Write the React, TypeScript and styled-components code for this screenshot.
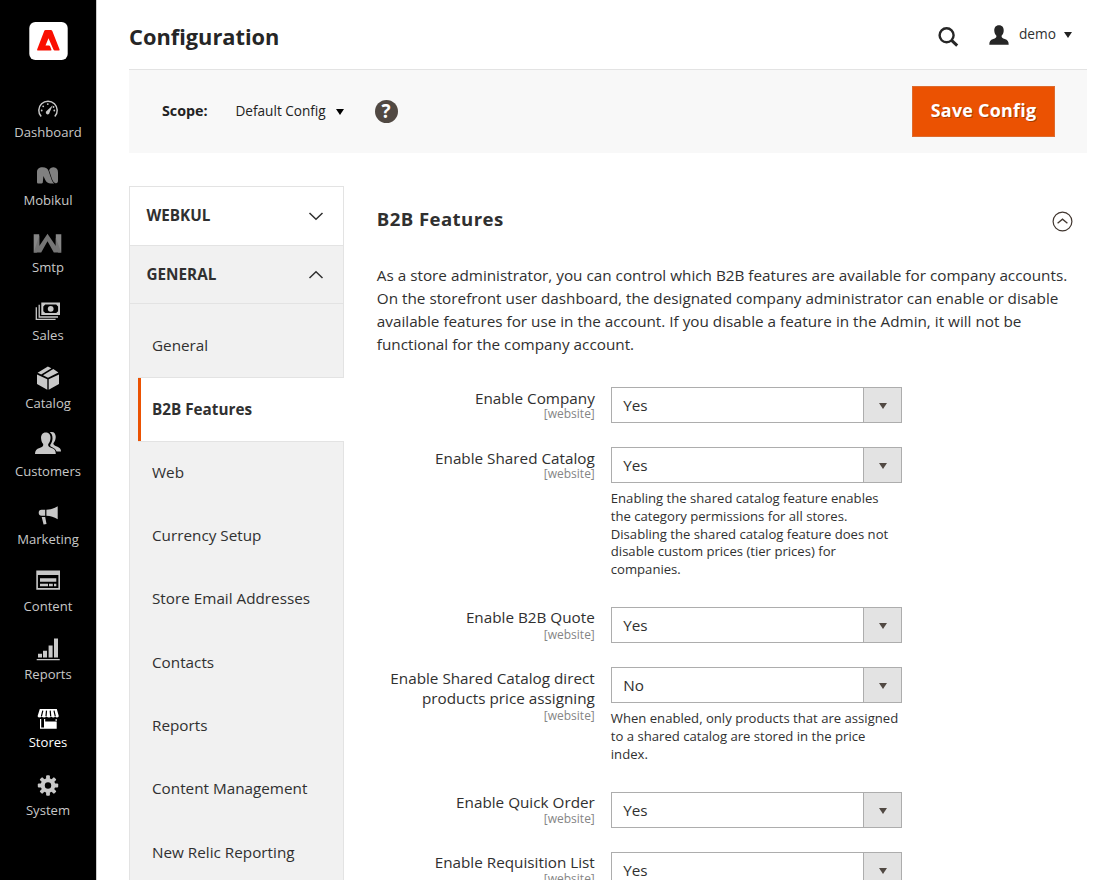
import React from 'react';
import styled, { createGlobalStyle, css } from 'styled-components';

const GlobalStyle = createGlobalStyle`
  *, *::before, *::after { box-sizing: border-box; }
  html, body { margin: 0; padding: 0; height: 880px; overflow: hidden; background: #fff; }
  body { font-family: "Open Sans", "Noto Sans", sans-serif; font-size: 15.28px; color: #303030; }
  button { font-family: inherit; border: 0; padding: 0; background: none; color: inherit; }
`;

/* ---------- page frame ---------- */

const Page = styled.div`
  display: flex;
  width: 1120px;
  height: 880px;
  overflow: hidden;
`;

const Sidebar = styled.nav`
  flex: none;
  display: flex;
  flex-direction: column;
  align-items: center;
  width: 97px;
  background: #000;
  border-right: 1px solid #ccc;
`;

const Logo = styled.svg`
  display: block;
  width: 40px;
  height: 40px;
  margin: 21px 0 31px;
`;

const NavList = styled.ul`
  list-style: none;
  margin: 0;
  padding: 0;
  width: 96px;
`;

const NavItem = styled.li<{ $active?: boolean }>`
  display: flex;
  flex-direction: column;
  align-items: center;
  height: 67.8px;
  color: ${(p) => (p.$active ? '#fff' : '#c8c8c8')};
`;

const NavIcon = styled.svg`
  display: block;
  flex: none;
  width: 40px;
  height: 34px;
`;

const NavLabel = styled.span`
  margin-top: -1.15px;
  font-size: 13.09px;
  line-height: 14px;
  white-space: nowrap;
`;

const Main = styled.main`
  flex: none;
  width: 958px;
  margin-left: 32px;
`;

/* ---------- header ---------- */

const Header = styled.header`
  display: flex;
  align-items: center;
  justify-content: space-between;
  height: 70px;
  border-bottom: 1px solid #e3e3e3;
`;

const PageTitle = styled.h1`
  margin: 0;
  padding-top: 5px;
  font-size: 21.8px;
  line-height: 30px;
  font-weight: 700;
  color: #262626;
`;

const HeaderTools = styled.div`
  display: flex;
  align-items: center;
  height: 69px;
  padding-right: 15px;
`;

const SearchIcon = styled.svg`
  width: 22px;
  height: 22px;
  margin: 4px 29.5px 0 0;
`;

const UserIcon = styled.svg`
  width: 20px;
  height: 20px;
  margin-right: 10.5px;
`;

const UserName = styled.span`
  width: 38px;
  margin-right: 7px;
  padding-bottom: 2px;
  font-size: 13.7px;
  line-height: 20px;
`;

const Caret = styled.i<{ $color?: string; $top?: number }>`
  display: block;
  width: 0;
  height: 0;
  margin-top: ${(p) => p.$top ?? 0}px;
  border: solid transparent;
  border-width: 6px 4.5px 0;
  border-top-color: ${(p) => p.$color ?? '#222'};
`;

/* ---------- toolbar ---------- */

const Toolbar = styled.section`
  display: flex;
  align-items: center;
  height: 83px;
  padding: 0 32px 0 33px;
  background: #f8f8f8;
`;

const ScopeLabel = styled.span`
  width: 73.5px;
  padding-bottom: 2px;
  font-size: 14.3px;
  font-weight: 700;
  color: #222;
`;

const ScopeValue = styled.span`
  width: 100px;
  padding-bottom: 2px;
  font-size: 13.6px;
  color: #222;
`;

const Help = styled.span`
  display: flex;
  align-items: center;
  justify-content: center;
  width: 23px;
  height: 23px;
  margin: 0 0 1px 31px;
  border-radius: 50%;
  background: #514943;
  color: #fff;
  font-size: 19px;
  line-height: 23px;
  font-weight: 700;
`;

const SaveButton = styled.button`
  width: 143px;
  height: 51px;
  margin-left: auto;
  padding-bottom: 3px;
  background: #eb5202;
  border: 1px solid #dd6b2e;
  color: #fff;
  font-size: 17.9px;
  font-weight: 700;
  letter-spacing: 0.25px;
  text-shadow: 1px 1px 0 rgba(0, 0, 0, 0.3);
`;

/* ---------- config area ---------- */

const Columns = styled.div`
  display: flex;
  align-items: flex-start;
  margin-top: 33px;
`;

const Tabs = styled.aside`
  flex: none;
  width: 215px;
  height: 720px;
  border: 1px solid #e3e3e3;
  background: #f1f1f1;
`;

const TabHeader = styled.div<{ $open?: boolean }>`
  display: flex;
  align-items: center;
  justify-content: space-between;
  height: ${(p) => (p.$open ? 58 : 59)}px;
  padding: 0 19px 2px 16.5px;
  border-bottom: 1px solid #e3e3e3;
  background: ${(p) => (p.$open ? '#f1f1f1' : '#fff')};
  font-weight: 700;
`;

const Chevron = styled.svg`
  width: 16px;
  height: 16px;
  margin-top: 1px;
  fill: none;
  stroke: #303030;
  stroke-width: 1.5;
`;

const TabList = styled.ul`
  list-style: none;
  margin: 0;
  padding: 10px 0 0;
`;

const TabItem = styled.li<{ $active?: boolean }>`
  display: flex;
  align-items: center;
  height: 63.3px;
  padding: 0 0 1px 22px;
  ${(p) =>
    p.$active &&
    css`
      height: 64.6px;
      margin: 0 -1px -1.2px 8px;
      padding: 0 0 1px 14px;
      background: #fff;
      border: solid #e3e3e3;
      border-width: 1px 0;
      box-shadow: inset 3px 0 0 #eb5202;
      font-weight: 700;
    `}
`;

const Content = styled.section`
  width: 700px;
  margin-left: 32.8px;
`;

const SectionHead = styled.div`
  display: flex;
  align-items: center;
  justify-content: space-between;
  height: 70px;
  padding-right: 4px;
`;

const SectionTitle = styled.h2`
  margin: 0;
  padding-bottom: 5px;
  font-size: 18.6px;
  line-height: 26px;
  font-weight: 700;
  letter-spacing: 0.42px;
`;

const CollapseIcon = styled.svg`
  width: 21px;
  height: 21px;
  fill: none;
  stroke: #41362f;
`;

const Description = styled.p`
  margin: 8px 0 31px;
  font-size: 15.29px;
  line-height: 23px;
  color: #303030;
  white-space: nowrap;
`;

const Row = styled.div<{ $height: number }>`
  display: flex;
  height: ${(p) => p.$height}px;
`;

const LabelBox = styled.div<{ $top: number; $gap: number }>`
  display: flex;
  flex-direction: column;
  width: 218px;
  padding-top: ${(p) => p.$top}px;
  text-align: right;
  line-height: 20px;

  & > :last-child {
    margin-top: ${(p) => p.$gap}px;
  }
`;

const ScopeHint = styled.span`
  font-size: 12px;
  line-height: 14px;
  color: #858585;
`;

const Control = styled.div`
  width: 291.5px;
  margin-left: 16px;
`;

const Select = styled.div`
  display: flex;
  height: 36px;
  border: 1px solid #adadad;
`;

const SelectValue = styled.span`
  flex: 1;
  padding-left: 11.4px;
  line-height: 35px;
`;

const SelectArrow = styled.span`
  display: flex;
  align-items: center;
  justify-content: center;
  width: 38px;
  background: #e3e3e3;
  border-left: 1px solid #adadad;
`;

const Note = styled.p`
  margin: 6.95px 0 0;
  font-size: 13.12px;
  line-height: 17.8px;
  white-space: nowrap;
`;

/* ---------- data ---------- */

const navItems: { label: string; active?: boolean; icon: React.ReactNode }[] = [
  {
    label: 'Dashboard',
    icon: (
      <g>
        <path d="M13.2 24.6A9.2 9.2 0 1 1 26.8 24.6" fill="none" stroke="currentColor" strokeWidth="1.5" />
        <path d="M24.7 13.2L21.6 20.6A1.9 1.9 0 1 1 18.9 18.8Z" fill="currentColor" />
        {[[13.7, 18.5], [15.2, 14.3], [19.8, 12.1], [26.3, 18.5], [25.5, 15]].map(([x, y]) => (
          <circle key={x} cx={x} cy={y} r="0.9" fill="currentColor" />
        ))}
      </g>
    ),
  },
  {
    label: 'Mobikul',
    icon: (
      <g fill="#808080">
        <path d="M9 12.2C9 9.2 11 7.3 14.6 7.3C18 7.3 19.6 8.4 20.6 11L23.2 18.4C23.9 20.6 24.6 22 26.3 23.4H23C20 23.4 18.3 22.3 17.3 20L15.4 16L14.8 22.4C14.6 23.2 13.8 23.4 13 23.4H10.6C9.5 23.4 9 22.9 9 21.9Z" />
        <path d="M21.1 10.2C22.1 8.2 23.3 7.3 25.6 7.3C28.4 7.3 30 9.4 30 12.4V20.6C30 22.6 29 23.6 27.4 23.2C25.6 22.6 24.6 20.6 23.8 18.4Z" />
      </g>
    ),
  },
  {
    label: 'Smtp',
    icon: (
      <g>
        <path d="M5.7 6.2H11.2V22.4L8.6 24.4H5.7ZM33.3 6.2H27.8V22.4L30.4 24.4H33.3Z" fill="#868686" />
        <path d="M19.5 5.7L11.3 18V7.4L5.7 24.4H13.2L19.5 13.2L25.8 24.4H33.3L27.8 10V18Z" fill="#757575" />
      </g>
    ),
  },
  {
    label: 'Sales',
    icon: (
      <g>
        <path fillRule="evenodd" d="M13.3 7.6H32V20H13.3ZM17.2 9.6L15.3 11.5V16.2L17.2 18H28.2L30.1 16.2V11.5L28.2 9.6Z" fill="currentColor" />
        <circle cx="22.7" cy="13.8" r="2.9" fill="currentColor" />
        <path d="M11.2 9.8V22H30M8.3 12.2V24.4H27.6" fill="none" stroke="currentColor" strokeWidth="1.3" />
      </g>
    ),
  },
  {
    label: 'Catalog',
    icon: (
      <g fill="currentColor">
        <path d="M9 11.5L19.3 16.2V26.8L9 21.1ZM31 11.5L20.7 16.2V26.8L31 21.1Z" />
        <path d="M9.6 9.8L19.9 3.5L23.4 5.2L13.2 11.4Z" />
        <path d="M15 12.3L25.3 6.1L30.4 9.4L20 14.8Z" />
      </g>
    ),
  },
  {
    label: 'Customers',
    icon: (
      <g fill="currentColor">
        <path d="M17.8 1.5C21.2 1.5 22.9 4.1 22.5 7.6C22.3 10 21.4 11.8 20.2 13C19.9 15.4 21 16.1 23.6 17C26.5 18 27.8 19.5 27.8 23H7C7 19.5 8.6 18 11.6 17C14.3 16.1 15.5 15.4 15.2 13C14 11.8 13.3 10 13.1 7.6C12.8 4.1 14.4 1.5 17.8 1.5Z" />
        <path d="M21.7 1.3C25.4-.1 28 2.2 27.7 6.5C27.5 9 26.7 10.8 25.4 12.2C25.2 14.1 26.7 14.7 29 15.6C31.8 16.7 33 18 33 20.6H28.6C27.5 17.8 25.6 16.6 22.7 15.4C22.2 15 22.1 14.2 22.3 13.7C23.7 12 24.4 10 24.5 7.6C24.6 4.7 23.7 2.5 21.7 1.3Z" />
      </g>
    ),
  },
  {
    label: 'Marketing',
    icon: (
      <g fill="currentColor">
        <path d="M29.7 7.2V20.3C26 17.8 22.6 16.9 18.4 16.7V10.7C22.6 10.5 26 9.7 29.7 7.2Z" />
        <path d="M17.2 10.7V16.7H13.5C11.7 16.7 10.7 15.4 10.7 13.7C10.7 12 11.7 10.7 13.5 10.7Z" />
        <path d="M13.7 18H17.2L18.5 24.9L15.6 25.5Z" />
      </g>
    ),
  },
  {
    label: 'Content',
    icon: (
      <g fill="currentColor">
        <path fillRule="evenodd" d="M8.3 3.4H32V22.7H8.3ZM9.9 8.1V21.1H30.4V8.1Z" />
        <path d="M12 11.3H28.3V14.7H12ZM12 16.8H20V19.2H12ZM21 16.8H24.8V19.2H21ZM26 16.8H28.3V19.2H26Z" />
      </g>
    ),
  },
  {
    label: 'Reports',
    icon: (
      <path
        d="M8.7 25H31.7V26.3H8.7ZM10 19.8H14V23.6H10ZM15 16.8H19V23.6H15ZM20.6 11.6H24.6V23.6H20.6ZM26 4.6H30V23.6H26Z"
        fill="currentColor"
      />
    ),
  },
  {
    label: 'Stores',
    active: true,
    icon: (
      <g>
        <path d="M11.8 7.1H28.8L30.7 13.8V14.6C30 15.7 28.3 15.7 27.2 14.8C26 15.7 24.4 15.7 23.3 14.8C22 15.7 20 15.7 18.5 14.8C17 15.7 15 15.7 13.7 14.8C12.6 15.7 10.3 15.7 9.7 14.6V13.8Z" fill="currentColor" />
        <path d="M14.8 8.6L13.4 14.4M18.5 8.6L18 14.4M22.2 8.6L22.7 14.4M26 8.6L27.3 14.4" stroke="#000" strokeWidth="1.2" />
        <path fillRule="evenodd" d="M12 17H13.2V25.4H16V17H17.2V19.6H28.7V26.8H12ZM27.6 17H28.7V20H27.6Z" fill="currentColor" />
      </g>
    ),
  },
  {
    label: 'System',
    icon: (
      <g>
        <g fill="currentColor">
          {[0, 45, 90, 135].map((angle) => (
            <rect key={angle} x="18.1" y="5.3" width="3.8" height="20.4" rx="1" transform={`rotate(${angle} 20 15.5)`} />
          ))}
        </g>
        <circle cx="20" cy="15.5" r="5.3" fill="none" stroke="currentColor" strokeWidth="4" />
        <circle cx="20" cy="15.5" r="3.2" fill="#000" />
      </g>
    ),
  },
];

const tabs = [
  'General',
  'B2B Features',
  'Web',
  'Currency Setup',
  'Store Email Addresses',
  'Contacts',
  'Reports',
  'Content Management',
  'New Relic Reporting',
];

interface Field {
  label: string[];
  value: string;
  height: number;
  top: number;
  gap: number;
  note?: string[];
}

const fields: Field[] = [
  { label: ['Enable Company'], value: 'Yes', height: 60, top: 1, gap: -1 },
  {
    label: ['Enable Shared Catalog'],
    value: 'Yes',
    height: 160,
    top: 1,
    gap: -1,
    note: [
      'Enabling the shared catalog feature enables',
      'the category permissions for all stores.',
      'Disabling the shared catalog feature does not',
      'disable custom prices (tier prices) for',
      'companies.',
    ],
  },
  { label: ['Enable B2B Quote'], value: 'Yes', height: 60, top: 0, gap: 1 },
  {
    label: ['Enable Shared Catalog direct', 'products price assigning'],
    value: 'No',
    height: 125,
    top: 1,
    gap: 1,
    note: ['When enabled, only products that are assigned', 'to a shared catalog are stored in the price', 'index.'],
  },
  { label: ['Enable Quick Order'], value: 'Yes', height: 60, top: 0, gap: 0 },
  { label: ['Enable Requisition List'], value: 'Yes', height: 60, top: 0, gap: 0 },
];

const Lines = ({ items }: { items: string[] }) => (
  <>
    {items.map((line, i) => (
      <React.Fragment key={line}>
        {i > 0 && <br />}
        {line}
      </React.Fragment>
    ))}
  </>
);

export default function App() {
  return (
    <Page>
      <GlobalStyle />
      <Sidebar>
        <Logo viewBox="0 0 40 40">
          <rect x="1.3" y="1" width="38.4" height="38" rx="6" fill="#fff" />
          <path
            d="M17.6 9H22.8C23.5 9 24 9.4 24.3 10L31.5 28.2C31.8 29 31.4 29.6 30.6 29.6H26.8C26.1 29.6 25.7 29.3 25.4 28.6L20.5 17.2L17.5 24.4H20.9C21.5 24.4 21.9 24.7 22.1 25.2L23.4 28.5C23.6 29.2 23.3 29.6 22.6 29.6H10C9.3 29.6 8.9 29 9.2 28.3L16.2 10C16.5 9.4 16.9 9 17.6 9Z"
            fill="#fa0f00"
          />
        </Logo>
        <NavList>
          {navItems.map((item) => (
            <NavItem key={item.label} $active={item.active}>
              <NavIcon viewBox="0 0 40 34">{item.icon}</NavIcon>
              <NavLabel>{item.label}</NavLabel>
            </NavItem>
          ))}
        </NavList>
      </Sidebar>

      <Main>
        <Header>
          <PageTitle>Configuration</PageTitle>
          <HeaderTools>
            <SearchIcon viewBox="0 0 22 22" fill="none" stroke="#262626">
              <circle cx="9.6" cy="9.3" r="7" strokeWidth="2.4" />
              <path d="M14.6 14.4L20.2 19.6" strokeWidth="3" />
            </SearchIcon>
            <UserIcon viewBox="0 0 20 20" fill="#262626">
              <path d="M10 .3C13.3.3 15 2.6 14.7 6C14.5 8 13.8 9.6 12.6 10.7C12.4 12.6 13.4 13.3 15.8 14.1C18.6 15.1 19.7 16.4 19.7 19.7H.3C.3 16.4 1.4 15.1 4.2 14.1C6.6 13.3 7.6 12.6 7.4 10.7C6.2 9.6 5.5 8 5.3 6C5 2.6 6.7.3 10 .3Z" />
            </UserIcon>
            <UserName>demo</UserName>
            <Caret $top={1} />
          </HeaderTools>
        </Header>

        <Toolbar>
          <ScopeLabel>Scope:</ScopeLabel>
          <ScopeValue>Default Config</ScopeValue>
          <Caret $color="#000" $top={1} />
          <Help>?</Help>
          <SaveButton>Save Config</SaveButton>
        </Toolbar>

        <Columns>
          <Tabs>
            <TabHeader>
              WEBKUL
              <Chevron viewBox="0 0 16 16">
                <path d="M1.5 5L8 11.3L14.5 5" />
              </Chevron>
            </TabHeader>
            <TabHeader $open>
              GENERAL
              <Chevron viewBox="0 0 16 16">
                <path d="M1.5 12L8 5.7L14.5 12" />
              </Chevron>
            </TabHeader>
            <TabList>
              {tabs.map((tab) => (
                <TabItem key={tab} $active={tab === 'B2B Features'}>
                  {tab}
                </TabItem>
              ))}
            </TabList>
          </Tabs>

          <Content>
            <SectionHead>
              <SectionTitle>B2B Features</SectionTitle>
              <CollapseIcon viewBox="0 0 21 21">
                <circle cx="10.5" cy="10.5" r="9.4" strokeWidth="1.2" />
                <path d="M5.6 12.2L10.5 8.2L15.4 12.2" strokeWidth="1.3" />
              </CollapseIcon>
            </SectionHead>
            <Description>
              <Lines
                items={[
                  'As a store administrator, you can control which B2B features are available for company accounts.',
                  'On the storefront user dashboard, the designated company administrator can enable or disable',
                  'available features for use in the account. If you disable a feature in the Admin, it will not be',
                  'functional for the company account.',
                ]}
              />
            </Description>
            {fields.map((field) => (
              <Row key={field.label[0]} $height={field.height}>
                <LabelBox $top={field.top} $gap={field.gap}>
                  <span>
                    <Lines items={field.label} />
                  </span>
                  <ScopeHint>[website]</ScopeHint>
                </LabelBox>
                <Control>
                  <Select>
                    <SelectValue>{field.value}</SelectValue>
                    <SelectArrow>
                      <Caret $color="#514943" $top={1} />
                    </SelectArrow>
                  </Select>
                  {field.note && (
                    <Note>
                      <Lines items={field.note} />
                    </Note>
                  )}
                </Control>
              </Row>
            ))}
          </Content>
        </Columns>
      </Main>
    </Page>
  );
}
